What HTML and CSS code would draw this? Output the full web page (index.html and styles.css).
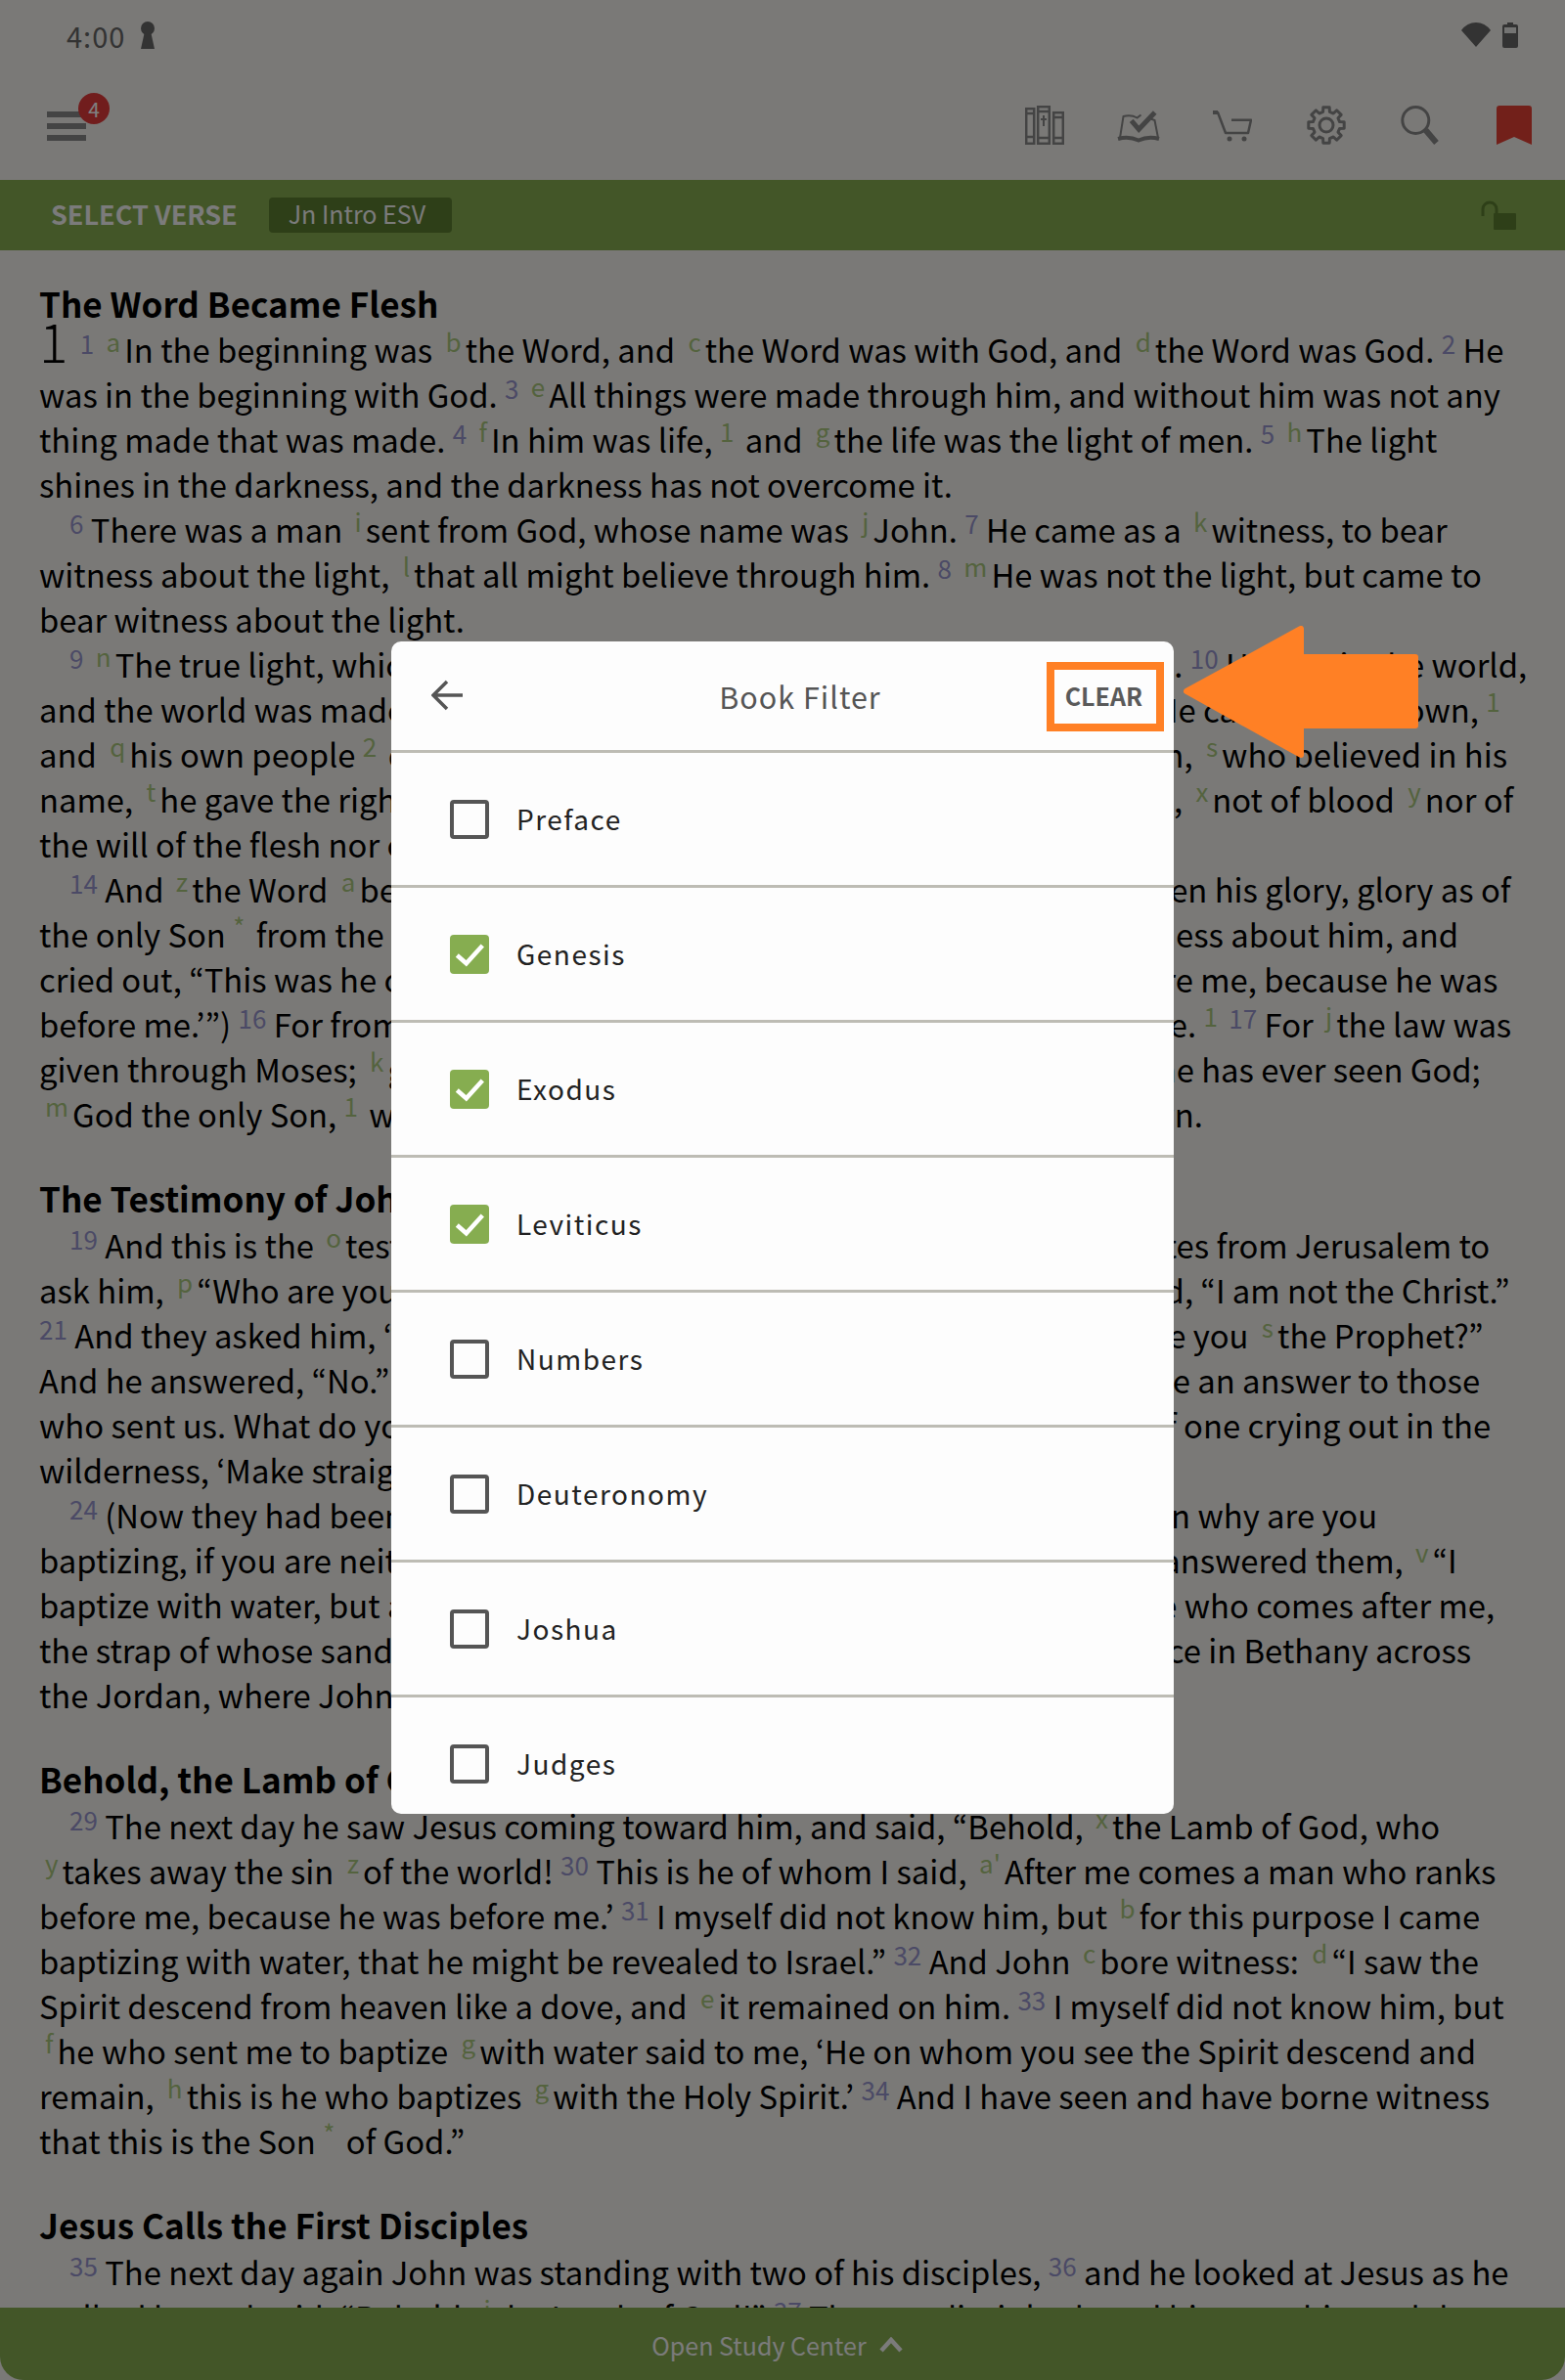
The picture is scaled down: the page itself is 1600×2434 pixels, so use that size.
FILE: index.html
```html
<!DOCTYPE html>
<html lang="en">
<head>
    <meta charset="UTF-8">
    <title>Book Filter</title>
    <link rel="stylesheet" href="styles.css">
</head>
<body>
<div class="screen">
    <div class="status-bar">
        <div class="status-left">
            <span class="time">4:00</span>
            <svg class="keyhole" viewBox="0 0 16 28"><circle cx="8" cy="7" r="7"/><path d="M5 10h6l4 18H1z"/></svg>
        </div>
        <div class="status-right">
            <svg class="wifi" viewBox="0 0 30 26"><path d="M15 25L0 8Q6 0 15 0t15 8z"/></svg>
            <svg class="battery" viewBox="0 0 16 26"><path d="M5 0h6v2h3q2 0 2 2v20q0 2-2 2H2q-2 0-2-2V4q0-2 2-2h3z"/><rect x="2" y="5" width="12" height="6" fill="#e8e8e6"/></svg>
        </div>
    </div>

    <div class="toolbar">
        <div class="menu-btn">
            <span class="menu-line"></span>
            <span class="menu-line"></span>
            <span class="menu-line"></span>
            <span class="badge">4</span>
        </div>
        <div class="toolbar-icons">
            <svg class="tool-icon" viewBox="0 0 40 40" fill="none" stroke="#888" stroke-width="2.500">
                <rect x="1.200" y="3.200" width="8" height="35.600"/><rect x="13.200" y="1.200" width="11.600" height="37.600"/><rect x="29.200" y="7.200" width="9.600" height="31.600"/>
                <path d="M1 8h8M1 32h8M13 6h12M13 33h12M29 12h10M29 33h10"/>
                <path d="M19 10v11M16 14h6" stroke-width="2"/>
            </svg>
            <svg class="tool-icon wide" viewBox="0 0 44 40" fill="none" stroke="#888" stroke-width="2">
                <path d="M3 33L6.500 11q8-2 14 1.500l4-3M35 14l1 0 2.500 1 3.500 18"/>
                <path d="M1 34q11-3 21 1.500q10-4.500 21-1.500" stroke-width="4"/>
                <path d="M14.700 15.300L22.300 24.300 38.700 7" stroke-width="5"/>
            </svg>
            <svg class="tool-icon" viewBox="0 0 40 40" fill="none" stroke="#888" stroke-width="2.500">
                <path d="M0 7h5l8 21h23l3-13.300H19" stroke-linejoin="round"/>
                <path d="M0 7h5" stroke-width="4"/>
                <circle cx="17" cy="34" r="2.500" fill="#888" stroke="none"/><circle cx="32" cy="34" r="2.500" fill="#888" stroke="none"/>
            </svg>
            <svg class="tool-icon" viewBox="0 0 40 40" fill="none" stroke="#888" stroke-width="3">
                <circle cx="20" cy="20" r="7"/>
                <path d="M16.600 6.400L16.800 1.800H23.200L23.400 6.400L27.200 8L30.600 4.800L35.200 9.400L32 12.800L33.600 16.600L38.200 16.800V23.200L33.600 23.400L32 27.200L35.200 30.600L30.600 35.200L27.200 32L23.400 33.600L23.200 38.200H16.800L16.600 33.600L12.800 32L9.400 35.200L4.800 30.600L8 27.200L6.400 23.400L1.800 23.200V16.800L6.400 16.600L8 12.800L4.800 9.400L9.400 4.800L12.800 8Z" stroke-linejoin="round"/>
            </svg>
            <svg class="tool-icon" viewBox="0 0 40 40" fill="none" stroke="#888">
                <circle cx="15.300" cy="15" r="13.500" stroke-width="3"/>
                <path d="M25.500 25L36.500 38" stroke-width="6"/>
            </svg>
            <svg class="tool-icon bookmark" viewBox="0 0 36 40"><path d="M3 0h30q3 0 3 3v37l-18-8-18 8V3q0-3 3-3z" fill="#e44034"/></svg>
        </div>
    </div>

    <div class="verse-bar">
        <span class="verse-label">SELECT VERSE</span>
        <span class="verse-pill">Jn Intro ESV</span>
        <svg class="lock" viewBox="0 0 37 30"><path d="M3 16V9a7 7 0 0 1 14 0v5" fill="none" stroke="#5c7e30" stroke-width="3"/><rect x="14" y="13" width="23" height="17" rx="1" fill="#5c7e30"/></svg>
    </div>

    <div class="reader">
        <h2 class="first">The Word Became Flesh</h2>
        <p><span class="chapter">1</span> <sup class="vn">1</sup> <sup class="fn">a</sup>In the beginning was <sup class="fn gap">b</sup>the Word, and <sup class="fn gap">c</sup>the Word was with God, and <sup class="fn gap">d</sup>the Word was God. <sup class="vn">2</sup> He<br>
        was in the beginning with God. <sup class="vn">3</sup> <sup class="fn">e</sup>All things were made through him, and without him was not any<br>
        thing made that was made. <sup class="vn">4</sup> <sup class="fn">f</sup>In him was life, <sup class="fn">1</sup> and <sup class="fn gap">g</sup>the life was the light of men. <sup class="vn">5</sup> <sup class="fn">h</sup>The light<br>
        shines in the darkness, and the darkness has not overcome it.</p>
        <p class="indent"><sup class="vn">6</sup> There was a man <sup class="fn gap">i</sup>sent from God, whose name was <sup class="fn gap">j</sup>John. <sup class="vn">7</sup> He came as a <sup class="fn gap">k</sup>witness, to bear<br>
        witness about the light, <sup class="fn gap">l</sup>that all might believe through him. <sup class="vn">8</sup> <sup class="fn">m</sup>He was not the light, but came to<br>
        bear witness about the light.</p>
        <p class="indent"><sup class="vn">9</sup> <sup class="fn">n</sup>The true light, which gives light to everyone, was coming into the world. <sup class="vn">10</sup> He was in the world,<br>
        and the world was made through him, <sup class="fn gap">o</sup>yet the world did not know him. <sup class="vn">11</sup> He came to <sup class="fn gap">p</sup>his own, <sup class="fn">1</sup><br>
        and <sup class="fn gap">q</sup>his own people <sup class="fn">2</sup> did not receive him. <sup class="vn">12</sup> But to all <sup class="fn gap">r</sup>who did receive him, <sup class="fn gap">s</sup>who believed in his<br>
        name, <sup class="fn gap">t</sup>he gave the right <sup class="fn gap">u</sup>to become <sup class="fn gap">v</sup>children <sup class="fn">i</sup>of God, <sup class="vn">13</sup> <sup class="fn">w</sup>who were born, <sup class="fn gap">x</sup>not of blood <sup class="fn gap">y</sup>nor of<br>
        the will of the flesh nor of the will of man, but of God.</p>
        <p class="indent"><sup class="vn">14</sup> And <sup class="fn gap">z</sup>the Word <sup class="fn gap">a</sup>became flesh <sup class="fn gap">b</sup>and dwelt <sup class="fn">i</sup>among us, <sup class="fn gap">c</sup>and we have seen his glory, glory as of<br>
        the only Son <sup class="fn">*</sup> from the Father, <sup class="fn gap">d</sup>full of grace <sup class="fn gap">e</sup>and truth. <sup class="vn">15</sup> <sup class="fn">f</sup>(John bore witness about him, and<br>
        cried out, “This was he of whom I said, <sup class="fn gap">g</sup>‘He who comes after me ranks before me, because he was<br>
        before me.’”) <sup class="vn">16</sup> For from his fullness <sup class="fn gap">h</sup>we have all received, <sup class="fn">i</sup>grace upon grace. <sup class="fn">1</sup> <sup class="vn">17</sup> For <sup class="fn gap">j</sup>the law was<br>
        given through Moses; <sup class="fn gap">k</sup>grace and truth came <sup class="fn gap">l</sup>through Jesus Christ. <sup class="vn">18</sup> No one has ever seen God;<br>
        <sup class="fn gap">m</sup>God the only Son, <sup class="fn">1</sup> who is <sup class="fn gap">n</sup>at the Father’s side, <sup class="fn">i</sup>he has <sup class="fn gap">o</sup>made him known.</p>

        <h2 class="spaced">The Testimony of John the Baptist</h2>
        <p class="indent"><sup class="vn">19</sup> And this is the <sup class="fn gap">o</sup>testimony of John, when the Jews sent priests and Levites from Jerusalem to<br>
        ask him, <sup class="fn gap">p</sup>“Who are you?” <sup class="vn">20</sup> <sup class="fn">q</sup>He confessed, and did not deny, but confessed, “I am not the Christ.”<br>
        <sup class="vn">21</sup> And they asked him, “What then? <sup class="fn gap">r</sup>Are you Elijah?” He said, “I am not.” “Are you <sup class="fn gap">s</sup>the Prophet?”<br>
        And he answered, “No.” <sup class="vn">22</sup> So they said to him, “Who are you? We need to give an answer to those<br>
        who sent us. What do you say about yourself?” <sup class="vn">23</sup> He said, <sup class="fn gap">t</sup>“I am the voice of one crying out in the<br>
        wilderness, ‘Make straight the way of the Lord,’ as the prophet Isaiah said.”</p>
        <p class="indent"><sup class="vn">24</sup> (Now they had been sent from the Pharisees.) <sup class="vn">25</sup> <sup class="fn">u</sup>They asked him, “Then why are you<br>
        baptizing, if you are neither the Christ, nor Elijah, nor the Prophet?” <sup class="vn">26</sup> John answered them, <sup class="fn gap">v</sup>“I<br>
        baptize with water, but among you stands one <sup class="fn gap">w</sup>you do not know, <sup class="vn">27</sup> even he who comes after me,<br>
        the strap of whose sandal I am not worthy to untie.” <sup class="vn">28</sup> These things took place in Bethany across<br>
        the Jordan, where John was baptizing.</p>

        <h2 class="spaced">Behold, the Lamb of God</h2>
        <p class="indent"><sup class="vn">29</sup> The next day he saw Jesus coming toward him, and said, “Behold, <sup class="fn gap">x</sup>the Lamb of God, who<br>
        <sup class="fn gap">y</sup>takes away the sin <sup class="fn gap">z</sup>of the world! <sup class="vn">30</sup> This is he of whom I said, <sup class="fn gap">a'</sup>After me comes a man who ranks<br>
        before me, because he was before me.’ <sup class="vn">31</sup> I myself did not know him, but <sup class="fn gap">b</sup>for this purpose I came<br>
        baptizing with water, that he might be revealed to Israel.” <sup class="vn">32</sup> And John <sup class="fn gap">c</sup>bore witness: <sup class="fn gap">d</sup>“I saw the<br>
        Spirit descend from heaven like a dove, and <sup class="fn gap">e</sup>it remained on him. <sup class="vn">33</sup> I myself did not know him, but<br>
        <sup class="fn gap">f</sup>he who sent me to baptize <sup class="fn gap">g</sup>with water said to me, ‘He on whom you see the Spirit descend and<br>
        remain, <sup class="fn gap">h</sup>this is he who baptizes <sup class="fn gap">g</sup>with the Holy Spirit.’ <sup class="vn">34</sup> And I have seen and have borne witness<br>
        that this is the Son <sup class="fn">*</sup> of God.”</p>

        <h2 class="spaced">Jesus Calls the First Disciples</h2>
        <p class="indent"><sup class="vn">35</sup> The next day again John was standing with two of his disciples, <sup class="vn">36</sup> and he looked at Jesus as he<br>
        walked by and said, “Behold, <sup class="fn gap">i</sup>the Lamb of God!” <sup class="vn">37</sup> The two disciples heard him say this, and they</p>
    </div>

    <div class="study-bar">
        <span>Open Study Center</span>
        <svg class="chevron" viewBox="0 0 24 16"><path d="M2 14L12 3l10 11" fill="none" stroke="#f6f6f6" stroke-width="4.500"/></svg>
    </div>

    <div class="scrim"></div>

    <div class="modal">
        <div class="modal-head">
            <svg class="back" viewBox="0 0 32 32"><path d="M16 2L2 16l14 14M2 16h30" fill="none" stroke="#555" stroke-width="3.500"/></svg>
            <span class="modal-title">Book Filter</span>
            <span class="clear">CLEAR</span>
        </div>
        <div class="book-row"><span class="box"></span>Preface</div>
        <div class="book-row"><span class="box on"><svg viewBox="0 0 40 40"><path d="M7.300 21l9.400 8.300L33.300 11" fill="none" stroke="#fff" stroke-width="4.500"/></svg></span>Genesis</div>
        <div class="book-row"><span class="box on"><svg viewBox="0 0 40 40"><path d="M7.300 21l9.400 8.300L33.300 11" fill="none" stroke="#fff" stroke-width="4.500"/></svg></span>Exodus</div>
        <div class="book-row"><span class="box on"><svg viewBox="0 0 40 40"><path d="M7.300 21l9.400 8.300L33.300 11" fill="none" stroke="#fff" stroke-width="4.500"/></svg></span>Leviticus</div>
        <div class="book-row"><span class="box"></span>Numbers</div>
        <div class="book-row"><span class="box"></span>Deuteronomy</div>
        <div class="book-row"><span class="box"></span>Joshua</div>
        <div class="book-row"><span class="box"></span>Judges</div>
    </div>

    <div class="highlight"></div>
    <svg class="arrow" viewBox="0 0 240 135"><path d="M3 67L120 3V32H237V102H120V132Z" fill="#ff8025" stroke="#ff8025" stroke-width="6" stroke-linejoin="round"/></svg>
</div>
</body>
</html>
```

FILE: styles.css
```css
* {
    box-sizing: border-box;
}

body {
    margin: 0;
    font-family: "Noto Sans CJK JP", "Noto Sans", sans-serif;
    color: #000;
}

.screen {
    position: relative;
    width: 1600px;
    height: 2434px;
    overflow: hidden;
    background: #f5f3ef;
    display: flex;
    flex-direction: column;
}

.status-bar {
    height: 72px;
    padding: 0 48px 0 68px;
    display: flex;
    align-items: center;
    justify-content: space-between;
    flex: none;
}

.status-left,
.status-right {
    display: flex;
    align-items: center;
}

.time {
    font-size: 29px;
    letter-spacing: 1px;
    color: #666;
}

.keyhole {
    width: 16px;
    height: 28px;
    margin-left: 15px;
    fill: #666;
}

.status-right svg {
    fill: #666;
}

.wifi {
    width: 30px;
    height: 26px;
}

.battery {
    width: 16px;
    height: 26px;
    margin-left: 12px;
}

.toolbar {
    height: 112px;
    padding: 0 34px 0 48px;
    display: flex;
    align-items: center;
    justify-content: space-between;
    flex: none;
}

.menu-btn {
    position: relative;
    width: 40px;
    display: flex;
    flex-direction: column;
    gap: 6px;
    margin-top: 1px;
}

.menu-line {
    height: 6px;
    background: #888;
}

.badge {
    position: absolute;
    left: 32px;
    top: -19px;
    width: 32px;
    height: 32px;
    border-radius: 50%;
    background: #e23a3a;
    color: #fff;
    font-size: 21px;
    line-height: 32px;
    text-align: center;
}

.toolbar-icons {
    display: flex;
    align-items: center;
    gap: 56px;
}

.tool-icon {
    width: 40px;
    height: 40px;
}

.tool-icon.wide {
    width: 44px;
    margin: 0 -2px;
}

.tool-icon.bookmark {
    width: 36px;
    margin-left: 2px;
}

.verse-bar {
    height: 72px;
    padding: 0 50px 0 52px;
    background: #86ad50;
    display: flex;
    align-items: center;
    flex: none;
}

.verse-label {
    margin-top: -3px;
    font-size: 27px;
    font-weight: 700;
    color: #f6f6f6;
}

.verse-pill {
    margin-left: 32px;
    width: 187px;
    height: 36px;
    padding-left: 20px;
    border-radius: 4px;
    background: #5c7e30;
    color: #f6f6f6;
    font-size: 25px;
    line-height: 33px;
}

.lock {
    width: 37px;
    height: 30px;
    margin-left: auto;
}

.reader {
    flex: 1;
    overflow: hidden;
    padding: 31px 0 0 40px;
    font-size: 32.800px;
    line-height: 46px;
    white-space: nowrap;
}

.reader h2 {
    margin: 0;
    font-size: 35px;
    line-height: 46px;
    font-weight: 700;
}

.reader h2.first {
    margin-bottom: 1px;
}

.reader h2.spaced {
    margin-top: 40px;
    margin-bottom: 2px;
}

.reader p {
    margin: 0;
}

.reader p.indent {
    text-indent: 31px;
}

.chapter {
    margin-right: 5px;
    font-size: 55px;
    font-weight: 300;
    line-height: 0;
}

sup {
    font-size: 26px;
    line-height: 0;
}

.vn {
    color: #9694cc;
    vertical-align: 9px;
}

.fn {
    color: #a8c67c;
    margin-right: 4px;
    vertical-align: 11px;
}

.fn.gap {
    margin-left: 6px;
}

.vn + .fn {
    margin-left: 5px;
}

.study-bar {
    height: 74px;
    padding: 2px 11px 0 0;
    background: #86ad50;
    border-radius: 0 0 24px 24px;
    display: flex;
    align-items: center;
    justify-content: center;
    gap: 13px;
    color: #f6f6f6;
    font-size: 25px;
    flex: none;
}

.chevron {
    width: 24px;
    height: 16px;
}

.scrim {
    position: absolute;
    inset: 0;
    background: rgba(0, 0, 0, 0.5);
}

.modal {
    position: absolute;
    left: 400px;
    top: 656px;
    width: 800px;
    height: 1199px;
    background: #fdfdfd;
    border-radius: 10px;
    overflow: hidden;
}

.modal-head {
    position: relative;
    height: 114px;
    border-bottom: 3px solid #bdbcb4;
    display: flex;
    align-items: center;
    justify-content: center;
}

.back {
    position: absolute;
    left: 41px;
    top: 39px;
    width: 32px;
    height: 32px;
}

.modal-title {
    margin-left: 36px;
    font-size: 30.500px;
    color: #555;
    letter-spacing: 1px;
}

.clear {
    position: absolute;
    right: 32px;
    top: 37px;
    font-size: 25px;
    font-weight: 700;
    color: #5a5a5a;
}

.book-row {
    height: 138px;
    padding: 0 0 2px 60px;
    border-bottom: 3px solid #bdbcb4;
    display: flex;
    align-items: center;
    font-size: 28px;
    letter-spacing: 1.500px;
    color: #222;
}

.box {
    width: 40px;
    height: 40px;
    margin: 2px 28px 0 0;
    border: 4px solid #555;
    border-radius: 4px;
    flex: none;
}

.box.on {
    border: none;
    background: #86ad50;
}

.box svg {
    display: block;
}

.highlight {
    position: absolute;
    left: 1070px;
    top: 677px;
    width: 120px;
    height: 71px;
    border: 8px solid #ff8025;
}

.arrow {
    position: absolute;
    left: 1210px;
    top: 640px;
    width: 240px;
    height: 135px;
}
```
